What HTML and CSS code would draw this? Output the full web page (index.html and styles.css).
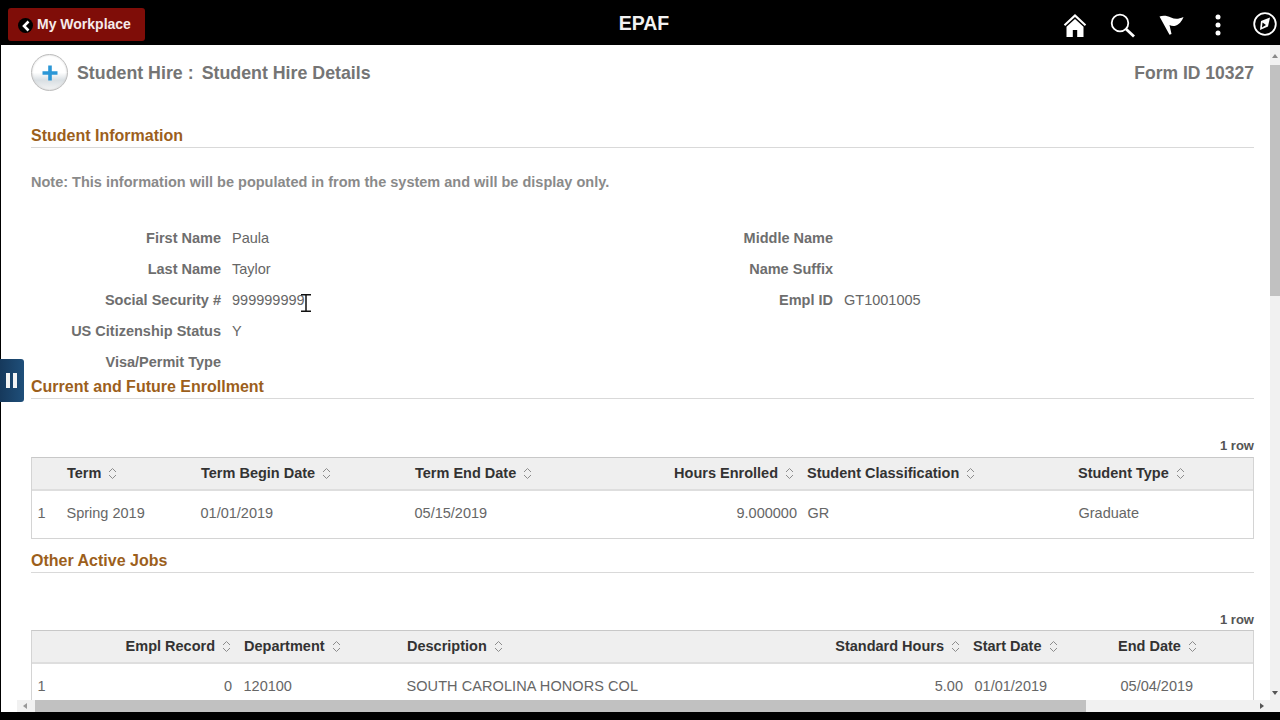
FILE: index.html
```html
<!DOCTYPE html>
<html lang="en">
<head>
<meta charset="utf-8">
<title>EPAF</title>
<link rel="stylesheet" href="styles.css">
</head>
<body>
<svg class="sprite" width="0" height="0"><symbol id="sort" viewBox="0 0 11 13"><path d="M2 5 5.500 1.500 9 5M2 8l3.500 3.500L9 8" fill="none" stroke="#8c8c8c" stroke-width="1"/></symbol></svg>
<header class="topbar">
  <a class="back-btn"><span class="back-dot"><svg width="10" height="12" viewBox="0 0 10 12"><path d="M7.500 1.500 3 6l4.500 4.500" fill="none" stroke="#fff" stroke-width="2.600"/></svg></span>My Workplace</a>
  <div class="app-title">EPAF</div>
  <nav class="top-icons">
    <svg class="ico-home" width="24" height="24" viewBox="0 0 24 24"><path d="M12 1 .8 11.500l1.400 1.500L12 3.900 21.800 13l1.400-1.500z" fill="#fff"/><path d="M12 6 3.500 13.800V24h6.300v-7h4.400v7h6.300V13.800z" fill="#fff"/></svg>
    <svg class="ico-search" width="25" height="25" viewBox="0 0 25 25"><circle cx="10" cy="10" r="8.300" fill="none" stroke="#fff" stroke-width="1.800"/><path d="m16 16 8 7.500" stroke="#fff" stroke-width="2.800" fill="none"/></svg>
    <svg class="ico-flag" width="25" height="24" viewBox="0 0 25 24"><path d="M.5 4.500C4 3 8 3.500 12 5.500c4 2 8 1.500 12.500-.5C23 9 20 13 15.500 14c-2 .2-3.500-.2-5-1l2 9-2 .8z" fill="#fff"/></svg>
    <svg class="ico-dots" width="6" height="22" viewBox="0 0 6 22"><circle cx="3" cy="3" r="2.500" fill="#fff"/><circle cx="3" cy="11" r="2.500" fill="#fff"/><circle cx="3" cy="19" r="2.500" fill="#fff"/></svg>
    <svg class="ico-nav" width="24" height="24" viewBox="0 0 24 24"><circle cx="12" cy="12" r="10.800" fill="none" stroke="#fff" stroke-width="1.800"/><path d="M17 5.500 8 9l-1 9 8-3.500z" fill="#fff"/><path d="M9.500 10.500 9 15.500l4-2.500z" fill="#000"/></svg>
  </nav>
</header>

<div class="viewport">
  <main class="content">
    <div class="title-row">
      <span class="plus-badge"><svg width="20" height="20" viewBox="0 0 20 20"><path d="M10 2.500v15M2.500 10h15" stroke="#2b97d6" stroke-width="3.600"/></svg></span>
      <h1 class="page-title">Student Hire<span class="colon">:</span>Student Hire Details</h1>
      <div class="form-id">Form ID 10327</div>
    </div>

    <h2 class="section">Student Information</h2>
    <p class="note">Note: This information will be populated in from the system and will be display only.</p>

    <div class="info-grid">
      <div class="info-col">
        <div class="info-row"><span class="lbl">First Name</span><span class="val">Paula</span></div>
        <div class="info-row"><span class="lbl">Last Name</span><span class="val">Taylor</span></div>
        <div class="info-row"><span class="lbl">Social Security #</span><span class="val">999999999</span></div>
        <div class="info-row"><span class="lbl">US Citizenship Status</span><span class="val">Y</span></div>
        <div class="info-row"><span class="lbl">Visa/Permit Type</span><span class="val"></span></div>
      </div>
      <div class="info-col right">
        <div class="info-row"><span class="lbl">Middle Name</span><span class="val"></span></div>
        <div class="info-row"><span class="lbl">Name Suffix</span><span class="val"></span></div>
        <div class="info-row"><span class="lbl">Empl ID</span><span class="val">GT1001005</span></div>
      </div>
    </div>

    <h2 class="section">Current and Future Enrollment</h2>
    <div class="row-count">1 row</div>
    <div class="grid enroll-grid">
      <div class="hd"></div>
      <div class="hd">Term<svg class="sort"><use href="#sort"/></svg></div>
      <div class="hd">Term Begin Date<svg class="sort"><use href="#sort"/></svg></div>
      <div class="hd">Term End Date<svg class="sort"><use href="#sort"/></svg></div>
      <div class="hd num">Hours Enrolled<svg class="sort"><use href="#sort"/></svg></div>
      <div class="hd">Student Classification<svg class="sort"><use href="#sort"/></svg></div>
      <div class="hd">Student Type<svg class="sort"><use href="#sort"/></svg></div>
      <div class="td">1</div>
      <div class="td">Spring 2019</div>
      <div class="td">01/01/2019</div>
      <div class="td">05/15/2019</div>
      <div class="td num tight">9.000000</div>
      <div class="td in1">GR</div>
      <div class="td in1">Graduate</div>
    </div>

    <h2 class="section other">Other Active Jobs</h2>
    <div class="row-count">1 row</div>
    <div class="grid jobs-grid">
      <div class="hd"></div>
      <div class="hd num">Empl Record<svg class="sort"><use href="#sort"/></svg></div>
      <div class="hd">Department<svg class="sort"><use href="#sort"/></svg></div>
      <div class="hd">Description<svg class="sort"><use href="#sort"/></svg></div>
      <div class="hd num">Standard Hours<svg class="sort"><use href="#sort"/></svg></div>
      <div class="hd">Start Date<svg class="sort"><use href="#sort"/></svg></div>
      <div class="hd">End Date<svg class="sort"><use href="#sort"/></svg></div>
      <div class="td">1</div>
      <div class="td num">0</div>
      <div class="td">120100</div>
      <div class="td wide">SOUTH CAROLINA HONORS COL</div>
      <div class="td num tight">5.00</div>
      <div class="td in2">01/01/2019</div>
      <div class="td in3">05/04/2019</div>
    </div>
  </main>

  <aside class="vscroll">
    <span class="arrow up"></span>
    <span class="vthumb"></span>
    <span class="arrow down"></span>
  </aside>

  <div class="hscroll">
    <span class="harrow left"></span>
    <span class="hthumb"></span>
    <span class="harrow right"></span>
  </div>
</div>

<div class="bottom-bar"></div>

<div class="pause-tab"><span></span><span></span></div>
<svg class="ibeam" width="12" height="18" viewBox="0 0 12 18"><path d="M1 .7h10M1 17.300h10M6 .7v16.600" stroke="#111" stroke-width="1.500" fill="none"/></svg>
</body>
</html>
```

FILE: styles.css
```css
* { box-sizing: border-box; }
html, body { margin: 0; height: 100%; }
body {
  width: 1280px;
  height: 720px;
  overflow: hidden;
  background: #000;
  font-family: "Liberation Sans", Arial, sans-serif;
  display: flex;
  flex-direction: column;
  position: relative;
}
.sprite { position: absolute; }
.topbar {
  height: 45px;
  flex: none;
  position: relative;
  display: flex;
  align-items: flex-start;
  justify-content: space-between;
  background: #000;
}
.back-btn {
  margin: 8px 0 0 8px;
  width: 137px;
  height: 33px;
  background: #7f0d08;
  border-radius: 3px;
  color: #f6eaea;
  font-weight: bold;
  font-size: 14px;
  display: flex;
  align-items: center;
  padding-left: 10px;
  padding-bottom: 1px;
}
.back-dot {
  width: 15px;
  height: 15px;
  border-radius: 50%;
  background: #000;
  margin-right: 4px;
  margin-top: 3px;
  display: flex;
  align-items: center;
  justify-content: center;
}
.app-title {
  position: absolute;
  left: 0; right: 0; top: 13px;
  text-align: center;
  color: #f2f2f2;
  font-size: 19.500px;
  line-height: 21px;
  font-weight: bold;
  margin-left: 8px;
}
.top-icons {
  position: relative;
  width: 216px;
  height: 45px;
}
.top-icons svg { position: absolute; }
.ico-home { left: -1px; top: 13px; }
.ico-search { left: 46px; top: 13px; }
.ico-flag { left: 95px; top: 12px; }
.ico-dots { left: 151px; top: 14px; }
.ico-nav { left: 189px; top: 12px; }

.viewport {
  flex: none;
  height: 667px;
  margin-left: 1px;
  display: grid;
  grid-template-columns: 1269px 10px;
  grid-template-rows: 655px 12px;
  background: #fff;
}
.content {
  overflow: hidden;
  padding: 0 16px 0 30px;
  color: #666;
}
.title-row {
  height: 74px;
  padding-top: 9px;
  display: flex;
  align-items: flex-start;
}
.plus-badge {
  width: 37px;
  height: 37px;
  border-radius: 50%;
  border: 1px solid #bdbdbd;
  background: linear-gradient(#fff 50%, #d9dfe3 72%, #f4f4f4);
  box-shadow: inset 0 0 2px #ccc;
  display: flex;
  align-items: center;
  justify-content: center;
  flex: none;
}
.page-title {
  margin: 9px 0 0 9px;
  font-size: 17.800px;
  line-height: 20px;
  font-weight: bold;
  color: #757575;
  flex: 1;
}
.colon { margin: 0 8px 0 5px; }
.form-id {
  margin-top: 9px;
  font-size: 17.500px;
  line-height: 20px;
  font-weight: bold;
  color: #757575;
}
.section {
  margin: 0;
  font-size: 16px;
  line-height: 20px;
  font-weight: bold;
  color: #9c5f1c;
  height: 29px;
  padding-top: 7px;
  border-bottom: 1px solid #d9d9d9;
}
.other { margin-top: 5px; }
.note {
  margin: 24px 0 0;
  height: 20px;
  line-height: 20px;
  font-size: 14.500px;
  font-weight: bold;
  color: #8a8a8a;
}
.info-grid {
  display: grid;
  grid-template-columns: 700px 1fr;
  margin-top: 30px;
  height: 148px;
}
.info-row {
  height: 31px;
  display: flex;
  align-items: center;
  font-size: 14.500px;
}
.lbl {
  width: 190px;
  text-align: right;
  font-weight: bold;
  color: #6e6e6e;
  flex: none;
}
.val { margin-left: 11px; color: #666; }
.right .lbl { width: 102px; }
.row-count {
  margin-top: 37px;
  height: 20px;
  line-height: 20px;
  text-align: right;
  font-size: 13px;
  font-weight: bold;
  color: #555;
}
.grid {
  display: grid;
  margin-top: 1px;
  border: 1px solid #d4d4d4;
  border-top-color: #c8c8c8;
  font-size: 14.500px;
}
.enroll-grid { grid-template-columns: 29px 134px 214px 259px 133px 271px 1fr; }
.jobs-grid { margin-top: 0; grid-template-columns: 29px 177px 163px 430px 136px 145px 1fr; }
.hd {
  height: 33px;
  background: #efefef;
  border-bottom: 2px solid #dedede;
  color: #333;
  font-weight: bold;
  padding: 0 6px 1px;
  display: flex;
  align-items: center;
  white-space: nowrap;
}
.td {
  height: 47px;
  padding: 0 6px 4px 5.500px;
  color: #666;
  display: flex;
  align-items: center;
  white-space: nowrap;
}
.hd.num, .td.num { justify-content: flex-end; }
.td.tight { padding-right: 4px; }
.td.in1 { padding-left: 6.500px; }
.td.in2 { padding-left: 7.500px; }
.td.in3 { padding-left: 8.500px; }
.td.wide { letter-spacing: .08px; }
.sort { width: 11px; height: 13px; margin-left: 6px; flex: none; }
.vscroll {
  background: #f1f1f1;
  display: flex;
  flex-direction: column;
}
.arrow { height: 20px; flex: none; position: relative; }
.arrow::after {
  content: "";
  position: absolute;
  left: 2px;
  border-left: 3px solid transparent;
  border-right: 3px solid transparent;
}
.arrow.up::after { top: 9px; border-bottom: 4px solid #888; }
.arrow.down { margin-top: auto; height: 12px; }
.arrow.down::after { top: 3px; border-top: 4px solid #555; }
.vthumb { height: 231px; background: #c1c1c1; }
.hscroll {
  grid-column: 1 / 3;
  margin-left: 16px;
  background: #f1f1f1;
  display: flex;
  align-items: center;
}
.harrow { flex: none; width: 18px; position: relative; height: 12px; }
.harrow::after {
  content: "";
  position: absolute;
  top: 3px;
  border-top: 3px solid transparent;
  border-bottom: 3px solid transparent;
}
.harrow.left::after { left: 6px; border-right: 4px solid #999; }
.harrow.right { margin-left: auto; width: 20px; }
.harrow.right::after { left: 0; border-left: 4px solid #555; }
.hthumb { width: 1051px; height: 12px; background: #c1c1c1; }
.bottom-bar { flex: 1; background: #000; }
.pause-tab {
  position: absolute;
  left: 0;
  top: 359px;
  width: 24px;
  height: 43px;
  border-radius: 0 3px 3px 0;
  background: linear-gradient(90deg, #16395c, #1f4f7a);
  display: flex;
  align-items: center;
  justify-content: center;
  gap: 3px;
  padding-right: 1px;
}
.pause-tab span { width: 4px; height: 15px; background: #f4f4f4; }
.ibeam { position: absolute; left: 300px; top: 294px; }
```
